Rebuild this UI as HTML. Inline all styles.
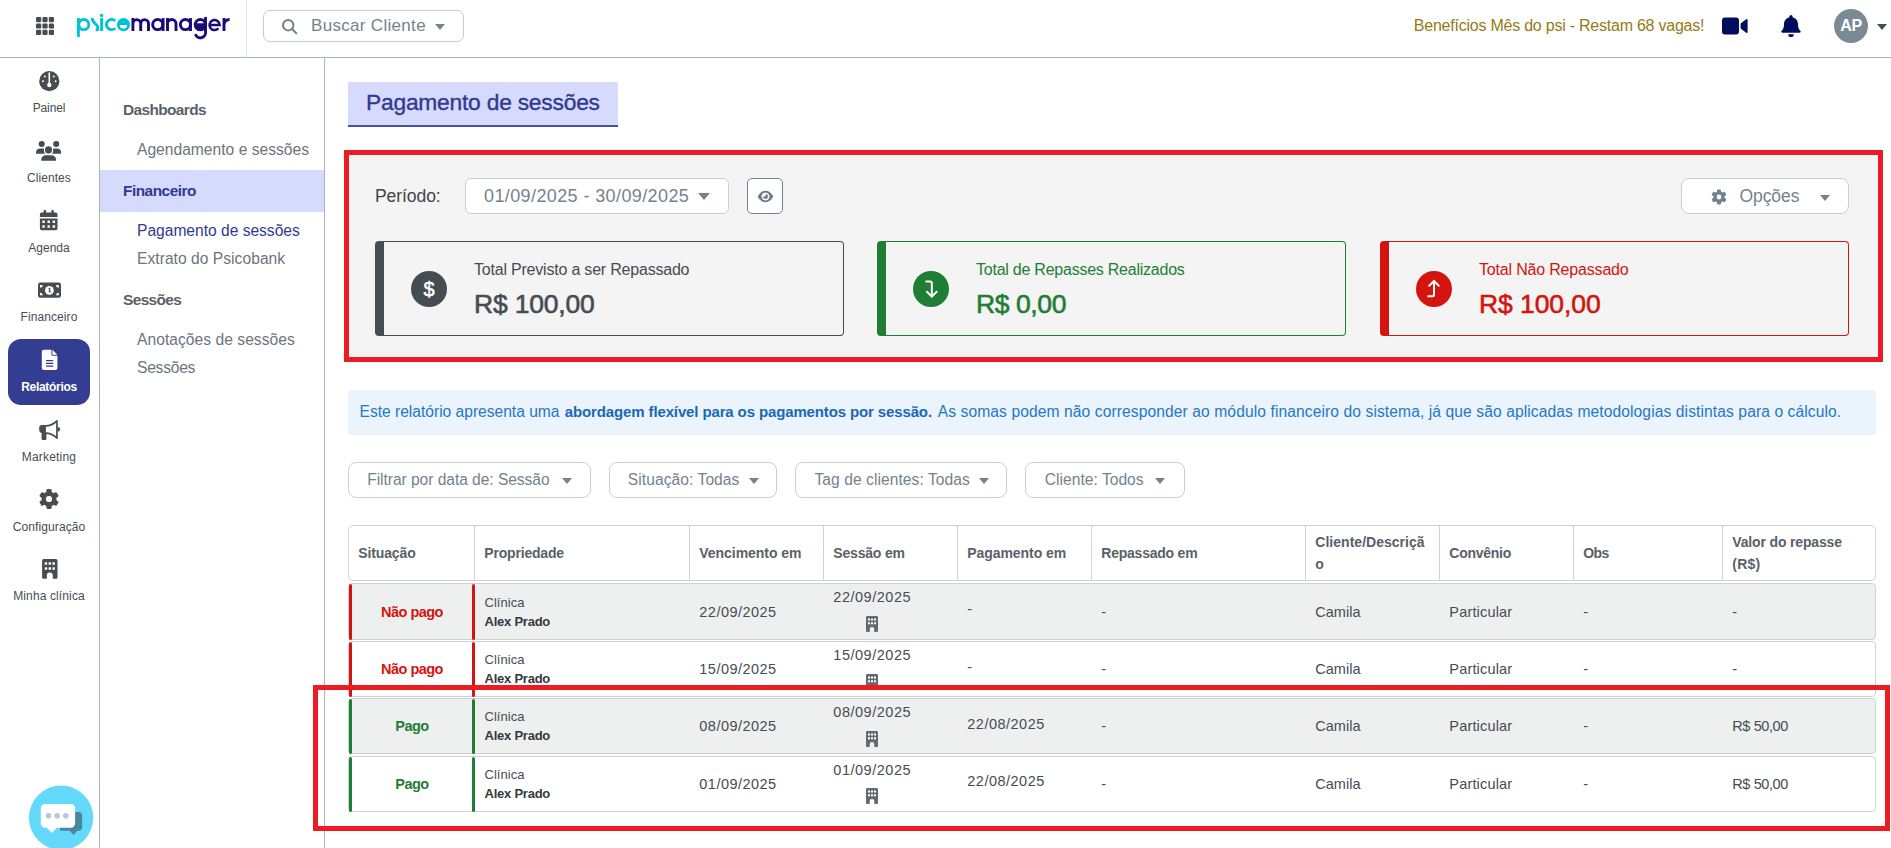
<!DOCTYPE html>
<html lang="pt-BR">
<head>
<meta charset="utf-8">
<title>Pagamento de sessões</title>
<style>
*{box-sizing:border-box;margin:0;padding:0}
html,body{width:1891px;height:848px;overflow:hidden;background:#fff}
body{font-family:"Liberation Sans",sans-serif;color:#454d52;position:relative}
.abs{position:absolute}
.t{position:absolute;white-space:nowrap;line-height:20px;height:20px;margin-top:-10px}
/* header */
#header{position:absolute;left:0;top:0;width:1891px;height:58px;border-bottom:1px solid #aab4bd;background:#fff}
#logosep{position:absolute;left:246px;top:0;width:1px;height:57px;background:#e3e6e9}
#search{position:absolute;left:263px;top:10px;width:201px;height:32px;border:1px solid #c3cad0;border-radius:7px;background:#fff}
/* rail */
#rail{position:absolute;left:0;top:58px;width:100px;height:790px;border-right:1px solid #aab4bd;background:#fff}
.rl{position:absolute;left:0;width:98px;text-align:center;font-size:12px;color:#454d52;line-height:16px;height:16px;margin-top:-8px;white-space:nowrap}
.ri{position:absolute}
#active{position:absolute;left:8px;top:281px;width:82px;height:66px;border-radius:13px;background:#333e93}
/* sub sidebar */
#sub{position:absolute;left:100px;top:58px;width:225px;height:790px;border-right:1px solid #aab4bd;background:#fff}
.sh{font-weight:bold;font-size:15.4px;color:#596168;left:123px}
.si{font-size:15.6px;color:#6c757d;left:137px}
#subact{position:absolute;left:100px;top:170px;width:224px;height:42px;background:#d6dafc}
/* main */
#title{position:absolute;left:348px;top:82px;width:270px;height:45px;background:#d6dafc;border-bottom:2px solid #4650a6}
#panel{position:absolute;left:344px;top:150px;width:1539px;height:212px;border:5px solid #ed1c24;background:#f4f4f4}
.card{position:absolute;top:241px;width:469px;height:95px;border:1px solid;border-left-width:9px;border-radius:4px}
.cic{position:absolute;top:271px;width:36px;height:36px;border-radius:50%}
.ct{font-size:16px}
.cv{font-size:26.500px;-webkit-text-stroke:0.600px;line-height:32px;height:32px;margin-top:-16px}
.btn{position:absolute;background:#fff;border:1px solid #c9cfd4;border-radius:8px}
.inf{font-size:15.600px;color:#2279c6}
#info{position:absolute;left:348px;top:390px;width:1528px;height:45px;background:#ebf3fd;border-radius:4px}
/* table */
#thead{position:absolute;left:348px;top:525px;width:1528px;height:56px;border:1px solid #cfd2d4;border-radius:5px;background:#fff}
.vs{position:absolute;top:525px;width:1px;height:56px;background:#cfd2d4}
.th{font-weight:bold;font-size:14px;color:#596168}
.row{position:absolute;left:348px;width:1528px;border:1px solid #cfd2d4;border-radius:4px}
.row.g{background:#eef0f0}
.row.w{background:#fff}
.bar{position:absolute;width:3px;border-radius:2px}
.td{font-size:14.5px;color:#454d52}
#ann2{position:absolute;left:313px;top:685px;width:1577px;height:146px;border:5px solid #ed1c24}
/*LS*/
#stext{letter-spacing:0.311px}
#benef{letter-spacing:-0.231px}
#r1{letter-spacing:-0.112px}
#r2{letter-spacing:0.063px}
#r3{letter-spacing:0.005px}
#r4{letter-spacing:0.074px}
#r5{letter-spacing:-0.299px}
#r6{letter-spacing:0.202px}
#r7{letter-spacing:0.110px}
#r8{letter-spacing:0.122px}
#s1{letter-spacing:-0.595px}
#s2{letter-spacing:0.017px}
#s3{letter-spacing:-0.492px}
#s4{letter-spacing:-0.010px}
#s5{letter-spacing:0.039px}
#s6{letter-spacing:-0.595px}
#s7{letter-spacing:0.047px}
#s8{letter-spacing:-0.235px}
#ttl{letter-spacing:-0.225px}
#per{letter-spacing:-0.065px}
#dat{letter-spacing:0.392px}
#opc{letter-spacing:-0.083px}
#ct0{letter-spacing:-0.205px}
#ct1{letter-spacing:-0.238px}
#ct2{letter-spacing:-0.182px}
#cv0{letter-spacing:-0.200px}
#cv1{letter-spacing:-0.405px}
#cv2{letter-spacing:-0.075px}
#f0{letter-spacing:-0.049px}
#f1{letter-spacing:0.065px}
#f2{letter-spacing:0.070px}
#f3{letter-spacing:0.019px}
#h0{letter-spacing:-0.137px}
#h1{letter-spacing:-0.190px}
#h2{letter-spacing:-0.042px}
#h3{letter-spacing:-0.184px}
#h4{letter-spacing:-0.072px}
#h5{letter-spacing:-0.230px}
#h6a{letter-spacing:0.023px}
#h7{letter-spacing:-0.269px}
#h8{letter-spacing:-0.667px}
#h9a{letter-spacing:-0.157px}
#h9b{letter-spacing:0.255px}
#ven0{letter-spacing:0.480px}
#ses0{letter-spacing:0.525px}
#pa0{letter-spacing:0.025px}
#pb0{letter-spacing:-0.236px}
#cam0{letter-spacing:0.015px}
#par0{letter-spacing:0.172px}
#ven1{letter-spacing:0.480px}
#ses1{letter-spacing:0.525px}
#pa1{letter-spacing:0.025px}
#pb1{letter-spacing:-0.236px}
#cam1{letter-spacing:0.015px}
#par1{letter-spacing:0.172px}
#ven2{letter-spacing:0.480px}
#ses2{letter-spacing:0.525px}
#pa2{letter-spacing:0.025px}
#pb2{letter-spacing:-0.236px}
#cam2{letter-spacing:0.015px}
#par2{letter-spacing:0.172px}
#ven3{letter-spacing:0.480px}
#ses3{letter-spacing:0.525px}
#pa3{letter-spacing:0.025px}
#pb3{letter-spacing:-0.236px}
#cam3{letter-spacing:0.015px}
#par3{letter-spacing:0.172px}
#pag2{letter-spacing:0.491px}
#pag3{letter-spacing:0.491px}
#val2{letter-spacing:-0.408px}
#val3{letter-spacing:-0.408px}
#infa{letter-spacing:-0.009px}
#infb{letter-spacing:-0.129px}
#infc{letter-spacing:0.101px}
#sit0{letter-spacing:-0.538px}
#sit1{letter-spacing:-0.538px}
#sit2{letter-spacing:-0.518px}
#sit3{letter-spacing:-0.518px}
/*END*/
</style>
</head>
<body>
<div id="header">
  <!-- grid icon -->
  <svg class="abs" style="left:36px;top:17px" width="18" height="18" viewBox="0 0 18 18" fill="#454d52"><rect x="0" y="0" width="5.200" height="5.200" rx="1.100"/><rect x="6.4" y="0" width="5.200" height="5.200" rx="1.100"/><rect x="12.8" y="0" width="5.200" height="5.200" rx="1.100"/><rect x="0" y="6.4" width="5.200" height="5.200" rx="1.100"/><rect x="6.4" y="6.4" width="5.200" height="5.200" rx="1.100"/><rect x="12.8" y="6.4" width="5.200" height="5.200" rx="1.100"/><rect x="0" y="12.8" width="5.200" height="5.200" rx="1.100"/><rect x="6.4" y="12.8" width="5.200" height="5.200" rx="1.100"/><rect x="12.8" y="12.8" width="5.200" height="5.200" rx="1.100"/></svg>
  <!-- logo -->
  <svg id="logo" class="abs" style="left:70px;top:8px" width="170" height="36" viewBox="0 0 170 36" fill="none" stroke-width="2.900">
    <g stroke="#00c4d6">
      <path d="M8.400 10 V28.900"/><circle cx="13.800" cy="16.550" r="5.050"/>
      <path d="M22.200 10.100 C22.200 13 23.400 14.300 25.200 15.600 C27.200 17.100 28 19 27.700 21 L27.700 21.800 L25.700 21.800" stroke-width="2.800" stroke-linejoin="round"/>
      <path d="M31.600 10.100 V23"/><circle cx="31.600" cy="7.500" r="1.800" fill="#00c4d6" stroke="none"/>
      <path d="M45.200 12.900 A5.200 5.050 0 1 0 45.200 20.200"/>
      <circle cx="53.500" cy="16.550" r="6.600" fill="#00c4d6" stroke="none"/>
    </g>
    <path d="M49.800 17.100 H57.100 A3.650 3.500 0 0 1 49.800 17.100 Z" fill="#fff" stroke="none"/>
    <g stroke="#1b0a7c">
      <path d="M62.900 23 V10.100 M62.900 15.500 A3.900 3.900 0 0 1 70.700 15.500 V23 M70.700 15.500 A3.900 3.900 0 0 1 78.500 15.500 V23"/>
      <circle cx="87.700" cy="16.550" r="5.050"/><path d="M93.100 10.100 V23"/>
      <path d="M97.500 23 V10.100 M97.500 15.800 A4.250 4.250 0 0 1 106 15.800 V23"/>
      <circle cx="115.400" cy="16.550" r="5.050"/><path d="M120.500 10.100 V23"/>
      <circle cx="130.300" cy="16.550" r="5.050"/><path d="M125.250 16.700 A5.050 5.050 0 0 0 135.350 16.700 Z" fill="#1b0a7c"/>
      <path d="M135.500 10.100 V23.200 A5.300 5.400 0 0 1 125.800 27.200" stroke-linecap="round"/>
      <path d="M139.600 16.900 H149.600 A5.050 5.050 0 1 0 148.400 20.300" stroke-width="2.500"/>
      <path d="M154 23 V10.100 M154 17 A5.500 5.500 0 0 1 159.600 11.500"/>
    </g>
  </svg>
  <div id="logosep"></div>
  <div id="search">
    <svg class="abs" style="left:17px;top:7px" width="18" height="18" viewBox="0 0 18 18" fill="none" stroke="#72838e" stroke-width="2"><circle cx="7.2" cy="7.2" r="5.2"/><path d="M11 11 L15.300 15.300" stroke-linecap="round"/></svg>
    <div class="t" id="stext" style="left:47px;top:15.400px;font-size:17px;color:#72838e">Buscar Cliente</div>
    <div class="abs" style="left:171px;top:13px;width:0;height:0;border-left:5px solid transparent;border-right:5px solid transparent;border-top:6px solid #72838e"></div>
  </div>
  <div class="t" id="benef" style="left:1413.800px;top:26px;font-size:16px;color:#957a16">Benefícios Mês do psi - Restam 68 vagas!</div>
  <!-- video -->
  <svg class="abs" style="left:1722px;top:17px" width="26" height="18" viewBox="0 0 26 18" fill="#000c5c"><rect x="0" y="0.5" width="17" height="17" rx="3"/><path d="M18.6 6.6 L24.2 2.3 Q25.6 1.5 25.6 3 L25.6 15 Q25.6 16.5 24.2 15.7 L18.6 11.4 Z"/></svg>
  <!-- bell -->
  <svg class="abs" style="left:1780px;top:14px" width="22" height="24" viewBox="0 0 22 24" fill="#000c5c"><path d="M11 1 a1.6 1.6 0 0 1 1.6 1.6 v0.6 c3.4 0.8 5.4 3.600 5.400 7.200 c0 3.600 1.200 5.200 2.400 6.400 c0.600 0.600 0.200 1.900 -0.900 1.900 h-17 c-1.100 0 -1.500 -1.300 -0.900 -1.900 c1.200 -1.200 2.400 -2.800 2.400 -6.400 c0 -3.600 2 -6.400 5.400 -7.200 v-0.600 a1.600 1.600 0 0 1 1.600 -1.600 z M8.200 20.300 h5.600 a2.800 2.800 0 0 1 -5.600 0 z"/></svg>
  <div class="abs" style="left:1834px;top:9px;width:34px;height:34px;border-radius:50%;background:#7a8a94;color:#fff;font-weight:bold;font-size:16px;line-height:34px;text-align:center;letter-spacing:-0.3px">AP</div>
  <div class="abs" style="left:1877px;top:24px;width:0;height:0;border-left:5px solid transparent;border-right:5px solid transparent;border-top:6px solid #454d52"></div>
</div>
<div id="rail">
  <div id="active" style="top:281px"></div>
  <!-- Painel -->
  <svg class="ri" style="left:39px;top:13px" width="21" height="21" viewBox="0 0 21 21"><circle cx="10.3" cy="10.2" r="10.1" fill="#454d52"/><path d="M10.3 2 V13" stroke="#fff" stroke-width="1.6" stroke-linecap="round"/><circle cx="10.3" cy="14" r="2.2" fill="#fff"/><circle cx="4" cy="10.3" r="1" fill="#fff"/><circle cx="5.8" cy="5.6" r="1" fill="#fff"/><circle cx="14.8" cy="5.6" r="1" fill="#fff"/><circle cx="16.6" cy="10.3" r="1" fill="#fff"/></svg>
  <div class="rl" id="r1" style="top:49.5px">Painel</div>
  <!-- Clientes -->
  <svg class="ri" style="left:35px;top:82px" width="27" height="22" viewBox="0 0 27 22" fill="#454d52"><circle cx="6.700" cy="4.060" r="3.050"/><circle cx="21.200" cy="4.060" r="3.050"/><circle cx="13.500" cy="9.900" r="3.550"/><path d="M1 13.700 V12.400 C1 10.200 2.800 8.600 5 8.600 H8.500 Q9.200 8.600 9 9.300 A4.800 4.800 0 0 0 10.200 13.700 Z"/><path d="M26.100 13.700 V12.400 C26.100 10.200 24.300 8.600 22.100 8.600 H18.600 Q17.900 8.600 18.100 9.300 A4.800 4.800 0 0 1 16.900 13.700 Z"/><path d="M6.300 20.800 V19.500 C6.300 17 8.500 15.200 11 15.200 H16.300 C18.800 15.200 21 17 21 19.500 V20.800 Z"/></svg>
  <div class="rl" id="r2" style="top:119.5px">Clientes</div>
  <!-- Agenda -->
  <svg class="ri" style="left:39px;top:152px" width="20" height="21" viewBox="0 0 20 21" fill="#454d52"><rect x="4.6" y="0" width="2.4" height="5" rx="0.8"/><rect x="12.4" y="0" width="2.400" height="5" rx="0.800"/><path d="M2.700 2.600 h14 a1.800 1.800 0 0 1 1.800 1.800 v2.600 h-17.600 v-2.600 a1.800 1.800 0 0 1 1.800 -1.800 z"/><path d="M0.900 8.500 h17.600 v10 a1.800 1.800 0 0 1 -1.800 1.800 h-14 a1.800 1.800 0 0 1 -1.800 -1.800 z"/><g fill="#fff"><rect x="3.300" y="10.500" width="2.500" height="2.500" rx="0.400"/><rect x="8.450" y="10.500" width="2.500" height="2.500" rx="0.400"/><rect x="13.600" y="10.500" width="2.500" height="2.500" rx="0.400"/><rect x="3.300" y="15.300" width="2.500" height="2.500" rx="0.400"/><rect x="8.450" y="15.300" width="2.500" height="2.500" rx="0.400"/><rect x="13.600" y="15.300" width="2.500" height="2.500" rx="0.400"/></g></svg>
  <div class="rl" id="r3" style="top:189.500px">Agenda</div>
  <!-- Financeiro -->
  <svg class="ri" style="left:37px;top:224px" width="25" height="16" viewBox="0 0 25 16"><rect x="1" y="0.600" width="23" height="15.100" rx="2.200" fill="#454d52"/><circle cx="12.400" cy="8.300" r="4.400" fill="#fff"/><path d="M11.500 7.100 l1.200 -0.800 v3.500 m-1.200 0 h2.500" stroke="#454d52" stroke-width="1.100" fill="none"/><g fill="#fff"><path d="M3 3.100 h2.800 a2.800 2.800 0 0 1 -2.800 2.600 z"/><path d="M21.800 3.100 h-2.800 a2.800 2.800 0 0 0 2.800 2.600 z"/><path d="M3 13.300 h2.800 a2.800 2.800 0 0 0 -2.800 -2.600 z"/><path d="M21.800 13.300 h-2.800 a2.800 2.800 0 0 1 2.800 -2.600 z"/></g></svg>
  <div class="rl" id="r4" style="top:258.800px">Financeiro</div>
  <!-- Relatorios -->
  <svg class="ri" style="left:41px;top:291px" width="17" height="22" viewBox="0 0 17 22"><path d="M2.800 0.700 h7.600 v4.900 a1.100 1.100 0 0 0 1.100 1.100 h4.900 v12.400 a2 2 0 0 1 -2 2 h-11.600 a2 2 0 0 1 -2 -2 v-16.400 a2 2 0 0 1 2 -2 z M11.400 0.800 l5 5 h-5 z" fill="#fff"/><path d="M5 11.600 h7.200 M5 14.400 h7.200 M5 17.100 h7.200" stroke="#333e93" stroke-width="1.200"/></svg>
  <div class="rl" id="r5" style="top:328.600px;color:#fff;font-weight:bold">Relatórios</div>
  <!-- Marketing -->
  <svg class="ri" style="left:38px;top:361px" width="23" height="22" viewBox="0 0 23 22" fill="#454d52"><path d="M4 6.100 H7.900 V13.900 H4 A2.800 2.800 0 0 1 1.200 11.100 V8.900 A2.800 2.800 0 0 1 4 6.100 Z"/><path d="M3.600 13.500 H8.400 V19.900 A1.100 1.100 0 0 1 7.200 21 H4.700 A1.100 1.100 0 0 1 3.600 19.900 Z"/><path d="M7.600 6.950 C13.200 6.950 15.600 5.200 18.950 1.900 V19.100 C15.600 15.800 13.200 14.050 7.600 14.050" fill="none" stroke="#454d52" stroke-width="1.700" stroke-linejoin="round"/><path d="M19.700 8 a2.350 2.350 0 0 1 0 4.700 z"/></svg>
  <div class="rl" id="r6" style="top:398.500px">Marketing</div>
  <!-- Config -->
  <svg class="ri" style="left:38.100px;top:430.100px" width="22" height="22" viewBox="0 0 22 22"><g fill="#454d52"><circle cx="11" cy="11" r="7.5"/><rect x="8.40" y="1.10" width="5.20" height="4.40" rx="1.1" transform="rotate(0 11 11)"/><rect x="8.40" y="1.10" width="5.20" height="4.40" rx="1.1" transform="rotate(60 11 11)"/><rect x="8.40" y="1.10" width="5.20" height="4.40" rx="1.1" transform="rotate(120 11 11)"/><rect x="8.40" y="1.10" width="5.20" height="4.40" rx="1.1" transform="rotate(180 11 11)"/><rect x="8.40" y="1.10" width="5.20" height="4.40" rx="1.1" transform="rotate(240 11 11)"/><rect x="8.40" y="1.10" width="5.20" height="4.40" rx="1.1" transform="rotate(300 11 11)"/></g><circle cx="11" cy="11" r="3.1" fill="#fff"/></svg>
  <div class="rl" id="r7" style="top:468.500px">Configuração</div>
  <!-- Clinica -->
  <svg class="ri" style="left:42px;top:501px" width="16" height="20" viewBox="0 0 16 20"><path d="M1.700 0 h12.200 a1.600 1.600 0 0 1 1.600 1.600 v16.800 a1.400 1.400 0 0 1 -1.400 1.400 h-3.300 v-3.400 a3 3 0 0 0 -6 0 v3.400 h-3.300 a1.400 1.400 0 0 1 -1.400 -1.400 v-16.800 a1.600 1.600 0 0 1 1.600 -1.600 z" fill="#454d52"/><g fill="#fff"><rect x="2.700" y="3.200" width="2.500" height="2.500" rx="0.500"/><rect x="6.550" y="3.200" width="2.500" height="2.500" rx="0.500"/><rect x="10.400" y="3.200" width="2.500" height="2.500" rx="0.500"/><rect x="2.700" y="8.200" width="2.500" height="2.500" rx="0.500"/><rect x="6.550" y="8.200" width="2.500" height="2.500" rx="0.500"/><rect x="10.400" y="8.200" width="2.500" height="2.500" rx="0.500"/></g></svg>
  <div class="rl" id="r8" style="top:538px">Minha clínica</div>
  <!-- chat -->
  <svg class="ri" style="left:28px;top:727px" width="66" height="66" viewBox="0 0 66 66"><circle cx="33.100" cy="32.800" r="32.200" fill="#63dafc"/><path d="M32 26.900 h18.600 a3.600 3.600 0 0 1 3.600 3.600 v11.600 a3.600 3.600 0 0 1 -3.600 3.600 h-1.400 l-3.800 4.200 l-3.800 -4.200 h-9.600 z" fill="#49899b"/><path d="M17 18.900 h25.900 a4.200 4.200 0 0 1 4.200 4.200 v15.500 a4.200 4.200 0 0 1 -4.200 4.200 h-14.100 l-4.900 5.200 l-5 -5.200 h-1.900 a4.200 4.200 0 0 1 -4.200 -4.200 v-15.500 a4.200 4.200 0 0 1 4.200 -4.200 z" fill="#fff"/><circle cx="20.500" cy="30.700" r="2.800" fill="#b9c5d9"/><circle cx="29.100" cy="30.700" r="2.800" fill="#b9c5d9"/><circle cx="37.800" cy="30.700" r="2.800" fill="#b9c5d9"/></svg>
</div>
<div id="sub"></div>
<div id="subact"></div>
<div class="t sh" id="s1" style="top:110.3px">Dashboards</div>
<div class="t si" id="s2" style="top:150.2px">Agendamento e sessões</div>
<div class="t sh" id="s3" style="top:191.1px;color:#2f3a8f">Financeiro</div>
<div class="t si" id="s4" style="top:231.2px;color:#2f3a8f">Pagamento de sessões</div>
<div class="t si" id="s5" style="top:259px">Extrato do Psicobank</div>
<div class="t sh" id="s6" style="top:300.2px">Sessões</div>
<div class="t si" id="s7" style="top:340px">Anotações de sessões</div>
<div class="t si" id="s8" style="top:368px">Sessões</div>
<div id="title"></div>
<div class="t" id="ttl" style="left:366px;top:102.400px;font-size:22.800px;color:#2f3a8f;line-height:30px;height:30px;margin-top:-15px;-webkit-text-stroke:0.350px #2f3a8f">Pagamento de sessões</div>
<div id="panel"></div>
<div class="t" id="per" style="left:375px;top:195.800px;font-size:17.500px;color:#3e454a">Período:</div>
<div class="btn" style="left:465px;top:178px;width:264px;height:36px;border-radius:6px"></div>
<div class="t" id="dat" style="left:484px;top:195.800px;font-size:18px;color:#72838e">01/09/2025 - 30/09/2025</div>
<div class="abs" style="left:698px;top:193px;width:0;height:0;border-left:6px solid transparent;border-right:6px solid transparent;border-top:7px solid #72838e"></div>
<div class="btn" style="left:747px;top:178px;width:36px;height:36px;border-radius:5px;border-color:#72838e"></div>
<svg class="abs" style="left:757px;top:190px" width="17" height="13" viewBox="0 0 17 13"><path d="M0.700 6.500 C2.600 2.600 5.400 0.800 8.500 0.800 C11.600 0.800 14.400 2.600 16.300 6.500 C14.400 10.400 11.600 12.200 8.500 12.200 C5.400 12.200 2.600 10.400 0.700 6.500 Z M8.500 2.600 a3.900 3.900 0 1 0 0.010 0 Z" fill="#6c7c88" fill-rule="evenodd"/><path d="M8.500 4.100 a2.400 2.400 0 1 1 -2.300 1.800 a1.300 1.300 0 0 0 2.300 -1.800 z" fill="#6c7c88"/></svg>
<div class="btn" style="left:1681px;top:178px;width:168px;height:36px"></div>
<svg class="abs" style="left:1709.600px;top:187.500px" width="18" height="18" viewBox="0 0 18 18"><g fill="#72838e"><circle cx="9" cy="9" r="5.7"/><rect x="7.00" y="1.40" width="4.00" height="3.90" rx="1.1" transform="rotate(0 9 9)"/><rect x="7.00" y="1.40" width="4.00" height="3.90" rx="1.1" transform="rotate(60 9 9)"/><rect x="7.00" y="1.40" width="4.00" height="3.90" rx="1.1" transform="rotate(120 9 9)"/><rect x="7.00" y="1.40" width="4.00" height="3.90" rx="1.1" transform="rotate(180 9 9)"/><rect x="7.00" y="1.40" width="4.00" height="3.90" rx="1.1" transform="rotate(240 9 9)"/><rect x="7.00" y="1.40" width="4.00" height="3.90" rx="1.1" transform="rotate(300 9 9)"/></g><circle cx="9" cy="9" r="2.4" fill="#fff"/></svg>
<div class="t" id="opc" style="left:1739.500px;top:195.800px;font-size:17.500px;color:#72838e">Opções</div>
<div class="abs" style="left:1820px;top:194.500px;width:0;height:0;border-left:5px solid transparent;border-right:5px solid transparent;border-top:6px solid #72838e"></div>
<div class="card" style="left:375px;border-color:#454d52"></div>
<div class="cic" style="left:411px;background:#454d52"></div>
<div class="t" style="left:411px;width:36px;text-align:center;top:289px;font-size:20px;color:#fff;-webkit-text-stroke:0.500px #fff">$</div>
<div class="t ct" id="ct0" style="left:474px;top:270.200px;color:#454d52">Total Previsto a ser Repassado</div>
<div class="t cv" id="cv0" style="left:474px;top:304.100px;color:#454d52">R$ 100,00</div>
<div class="card" style="left:877px;border-color:#1e7e34"></div>
<div class="cic" style="left:913px;background:#1e7e34"></div>
<svg class="abs" style="left:913px;top:271px" width="36" height="36" viewBox="0 0 36 36" fill="none" stroke="#fff" stroke-width="2"><path d="M12.500 10.400 H17.300 Q18.800 10.400 18.800 11.900 V25.400"/><path d="M13.400 20.300 L18.800 25.700 L24.200 20.300"/></svg>
<div class="t ct" id="ct1" style="left:976px;top:270.200px;color:#1e7e34">Total de Repasses Realizados</div>
<div class="t cv" id="cv1" style="left:976px;top:304.100px;color:#1e7e34">R$ 0,00</div>
<div class="card" style="left:1380px;border-color:#d4150f"></div>
<div class="cic" style="left:1416px;background:#d4150f"></div>
<svg class="abs" style="left:1416px;top:271px" width="36" height="36" viewBox="0 0 36 36" fill="none" stroke="#fff" stroke-width="2"><path d="M11.400 25.200 H16.500 Q18 25.200 18 23.700 V10.300"/><path d="M12.600 15.400 L18 10 L23.400 15.400"/></svg>
<div class="t ct" id="ct2" style="left:1479px;top:270.200px;color:#d4150f">Total Não Repassado</div>
<div class="t cv" id="cv2" style="left:1479px;top:304.100px;color:#d4150f">R$ 100,00</div>
<div id="info"></div>
<div class="t inf" id="infa" style="left:359.500px;top:412.400px">Este relatório apresenta uma</div>
<div class="t inf" id="infb" style="left:564.800px;top:412.400px;font-weight:bold;color:#1a68b4;font-size:15px">abordagem flexível para os pagamentos por sessão.</div>
<div class="t inf" id="infc" style="left:937.700px;top:412.400px">As somas podem não corresponder ao módulo financeiro do sistema, já que são aplicadas metodologias distintas para o cálculo.</div>
<div class="btn" style="left:348px;top:462px;width:243px;height:36px"></div>
<div class="t ft" id="f0" style="left:367.2px;top:480.300px;font-size:15.600px;color:#72838e">Filtrar por data de: Sessão</div>
<div class="abs" style="left:562px;top:477.500px;width:0;height:0;border-left:5px solid transparent;border-right:5px solid transparent;border-top:6px solid #72838e"></div>
<div class="btn" style="left:609px;top:462px;width:168px;height:36px"></div>
<div class="t ft" id="f1" style="left:627.8px;top:480.300px;font-size:15.600px;color:#72838e">Situação: Todas</div>
<div class="abs" style="left:748.7px;top:477.500px;width:0;height:0;border-left:5px solid transparent;border-right:5px solid transparent;border-top:6px solid #72838e"></div>
<div class="btn" style="left:795px;top:462px;width:212px;height:36px"></div>
<div class="t ft" id="f2" style="left:814.4px;top:480.300px;font-size:15.600px;color:#72838e">Tag de clientes: Todas</div>
<div class="abs" style="left:978.8px;top:477.500px;width:0;height:0;border-left:5px solid transparent;border-right:5px solid transparent;border-top:6px solid #72838e"></div>
<div class="btn" style="left:1025px;top:462px;width:160px;height:36px"></div>
<div class="t ft" id="f3" style="left:1044.8px;top:480.300px;font-size:15.600px;color:#72838e">Cliente: Todos</div>
<div class="abs" style="left:1155.4px;top:477.500px;width:0;height:0;border-left:5px solid transparent;border-right:5px solid transparent;border-top:6px solid #72838e"></div>
<div id="thead"></div>
<div class="vs" style="left:474px"></div>
<div class="vs" style="left:689px"></div>
<div class="vs" style="left:823px"></div>
<div class="vs" style="left:957px"></div>
<div class="vs" style="left:1091px"></div>
<div class="vs" style="left:1305px"></div>
<div class="vs" style="left:1439px"></div>
<div class="vs" style="left:1573px"></div>
<div class="vs" style="left:1722px"></div>
<div class="t th" id="h0" style="left:358.3px;top:552.800px">Situação</div>
<div class="t th" id="h1" style="left:484.3px;top:552.800px">Propriedade</div>
<div class="t th" id="h2" style="left:699.3px;top:552.800px">Vencimento em</div>
<div class="t th" id="h3" style="left:833.3px;top:552.800px">Sessão em</div>
<div class="t th" id="h4" style="left:967.3px;top:552.800px">Pagamento em</div>
<div class="t th" id="h5" style="left:1101.3px;top:552.800px">Repassado em</div>
<div class="t th" id="h7" style="left:1449.3px;top:552.800px">Convênio</div>
<div class="t th" id="h8" style="left:1583.3px;top:552.800px">Obs</div>
<div class="t th" id="h6a" style="left:1315.300px;top:541.800px">Cliente/Descriçã</div>
<div class="t th" id="h6b" style="left:1315.300px;top:563.800px">o</div>
<div class="t th" id="h9a" style="left:1732.300px;top:541.800px">Valor do repasse</div>
<div class="t th" id="h9b" style="left:1732.300px;top:563.800px">(R$)</div>
<!--ROWS-->
<div class="row g" style="top:583px;height:57px"></div>
<div class="bar" style="left:349px;top:583.5px;height:56px;background:#d4150f"></div><div class="bar" style="left:472px;top:583.5px;height:56px;background:#d4150f"></div>
<div class="t td sit" id="sit0" style="left:352px;width:120px;text-align:center;top:611.6px;color:#d4150f;font-weight:bold">Não pago</div>
<div class="t td" id="pa0" style="left:484.5px;top:602.8px;font-size:13px">Clínica</div>
<div class="t td" id="pb0" style="left:484.5px;top:621.8px;font-size:13px;font-weight:bold;color:#33393d">Alex Prado</div>
<div class="t td dt" id="ven0" style="left:699.3px;top:611.6px">22/09/2025</div>
<div class="t td dt" id="ses0" style="left:833.3px;top:597.2px">22/09/2025</div>
<svg class="abs" style="left:866px;top:616px" width="12" height="16" viewBox="0 0 12 16"><path d="M1.3 0 h9.4 a1.3 1.3 0 0 1 1.3 1.3 v13.4 a1.3 1.3 0 0 1 -1.3 1.3 h-2.4 v-2.8 a2.3 2.3 0 0 0 -4.6 0 v2.8 h-2.4 a1.3 1.3 0 0 1 -1.3 -1.3 v-13.4 a1.3 1.3 0 0 1 1.3 -1.3 z" fill="#626a71"/><g fill="#fff"><rect x="2" y="2.5" width="2" height="2"/><rect x="5" y="2.5" width="2" height="2"/><rect x="8" y="2.5" width="2" height="2"/><rect x="2" y="6.3" width="2" height="2"/><rect x="5" y="6.3" width="2" height="2"/><rect x="8" y="6.3" width="2" height="2"/></g></svg>
<div class="t td dt" id="pag0" style="left:967.3px;top:609.3px">-</div>
<div class="t td" style="left:1101.3px;top:611.6px">-</div>
<div class="t td" id="cam0" style="left:1315.3px;top:611.6px">Camila</div>
<div class="t td" id="par0" style="left:1449.3px;top:611.6px">Particular</div>
<div class="t td" style="left:1583.3px;top:611.6px">-</div>
<div class="t td" id="val0" style="left:1732.3px;top:611.6px">-</div>
<div class="row w" style="top:641px;height:56px"></div>
<div class="bar" style="left:349px;top:641.5px;height:55px;background:#d4150f"></div><div class="bar" style="left:472px;top:641.5px;height:55px;background:#d4150f"></div>
<div class="t td sit" id="sit1" style="left:352px;width:120px;text-align:center;top:669.1px;color:#d4150f;font-weight:bold">Não pago</div>
<div class="t td" id="pa1" style="left:484.5px;top:660.3px;font-size:13px">Clínica</div>
<div class="t td" id="pb1" style="left:484.5px;top:679.3px;font-size:13px;font-weight:bold;color:#33393d">Alex Prado</div>
<div class="t td dt" id="ven1" style="left:699.3px;top:669.1px">15/09/2025</div>
<div class="t td dt" id="ses1" style="left:833.3px;top:654.7px">15/09/2025</div>
<svg class="abs" style="left:866px;top:673.6px" width="12" height="16" viewBox="0 0 12 16"><path d="M1.3 0 h9.4 a1.3 1.3 0 0 1 1.3 1.3 v13.4 a1.3 1.3 0 0 1 -1.3 1.3 h-2.4 v-2.8 a2.3 2.3 0 0 0 -4.6 0 v2.8 h-2.4 a1.3 1.3 0 0 1 -1.3 -1.3 v-13.4 a1.3 1.3 0 0 1 1.3 -1.3 z" fill="#626a71"/><g fill="#fff"><rect x="2" y="2.5" width="2" height="2"/><rect x="5" y="2.5" width="2" height="2"/><rect x="8" y="2.5" width="2" height="2"/><rect x="2" y="6.3" width="2" height="2"/><rect x="5" y="6.3" width="2" height="2"/><rect x="8" y="6.3" width="2" height="2"/></g></svg>
<div class="t td dt" id="pag1" style="left:967.3px;top:666.8px">-</div>
<div class="t td" style="left:1101.3px;top:669.1px">-</div>
<div class="t td" id="cam1" style="left:1315.3px;top:669.1px">Camila</div>
<div class="t td" id="par1" style="left:1449.3px;top:669.1px">Particular</div>
<div class="t td" style="left:1583.3px;top:669.1px">-</div>
<div class="t td" id="val1" style="left:1732.3px;top:669.1px">-</div>
<div class="row g" style="top:698px;height:56px"></div>
<div class="bar" style="left:349px;top:698.5px;height:55px;background:#1e7e34"></div><div class="bar" style="left:472px;top:698.5px;height:55px;background:#1e7e34"></div>
<div class="t td sit" id="sit2" style="left:352px;width:120px;text-align:center;top:725.6px;color:#1e7e34;font-weight:bold">Pago</div>
<div class="t td" id="pa2" style="left:484.5px;top:716.8px;font-size:13px">Clínica</div>
<div class="t td" id="pb2" style="left:484.5px;top:735.8px;font-size:13px;font-weight:bold;color:#33393d">Alex Prado</div>
<div class="t td dt" id="ven2" style="left:699.3px;top:725.6px">08/09/2025</div>
<div class="t td dt" id="ses2" style="left:833.3px;top:712.2px">08/09/2025</div>
<svg class="abs" style="left:866px;top:731px" width="12" height="16" viewBox="0 0 12 16"><path d="M1.3 0 h9.4 a1.3 1.3 0 0 1 1.3 1.3 v13.4 a1.3 1.3 0 0 1 -1.3 1.3 h-2.4 v-2.8 a2.3 2.3 0 0 0 -4.6 0 v2.8 h-2.4 a1.3 1.3 0 0 1 -1.3 -1.3 v-13.4 a1.3 1.3 0 0 1 1.3 -1.3 z" fill="#626a71"/><g fill="#fff"><rect x="2" y="2.5" width="2" height="2"/><rect x="5" y="2.5" width="2" height="2"/><rect x="8" y="2.5" width="2" height="2"/><rect x="2" y="6.3" width="2" height="2"/><rect x="5" y="6.3" width="2" height="2"/><rect x="8" y="6.3" width="2" height="2"/></g></svg>
<div class="t td dt" id="pag2" style="left:967.3px;top:723.6px">22/08/2025</div>
<div class="t td" style="left:1101.3px;top:725.6px">-</div>
<div class="t td" id="cam2" style="left:1315.3px;top:725.6px">Camila</div>
<div class="t td" id="par2" style="left:1449.3px;top:725.6px">Particular</div>
<div class="t td" style="left:1583.3px;top:725.6px">-</div>
<div class="t td" id="val2" style="left:1732.3px;top:725.6px">R$ 50,00</div>
<div class="row w" style="top:756px;height:56px"></div>
<div class="bar" style="left:349px;top:756.5px;height:55px;background:#1e7e34"></div><div class="bar" style="left:472px;top:756.5px;height:55px;background:#1e7e34"></div>
<div class="t td sit" id="sit3" style="left:352px;width:120px;text-align:center;top:784.1px;color:#1e7e34;font-weight:bold">Pago</div>
<div class="t td" id="pa3" style="left:484.5px;top:775.3px;font-size:13px">Clínica</div>
<div class="t td" id="pb3" style="left:484.5px;top:794.3px;font-size:13px;font-weight:bold;color:#33393d">Alex Prado</div>
<div class="t td dt" id="ven3" style="left:699.3px;top:784.1px">01/09/2025</div>
<div class="t td dt" id="ses3" style="left:833.3px;top:769.7px">01/09/2025</div>
<svg class="abs" style="left:866px;top:788px" width="12" height="16" viewBox="0 0 12 16"><path d="M1.3 0 h9.4 a1.3 1.3 0 0 1 1.3 1.3 v13.4 a1.3 1.3 0 0 1 -1.3 1.3 h-2.4 v-2.8 a2.3 2.3 0 0 0 -4.6 0 v2.8 h-2.4 a1.3 1.3 0 0 1 -1.3 -1.3 v-13.4 a1.3 1.3 0 0 1 1.3 -1.3 z" fill="#626a71"/><g fill="#fff"><rect x="2" y="2.5" width="2" height="2"/><rect x="5" y="2.5" width="2" height="2"/><rect x="8" y="2.5" width="2" height="2"/><rect x="2" y="6.3" width="2" height="2"/><rect x="5" y="6.3" width="2" height="2"/><rect x="8" y="6.3" width="2" height="2"/></g></svg>
<div class="t td dt" id="pag3" style="left:967.3px;top:780.8px">22/08/2025</div>
<div class="t td" style="left:1101.3px;top:784.1px">-</div>
<div class="t td" id="cam3" style="left:1315.3px;top:784.1px">Camila</div>
<div class="t td" id="par3" style="left:1449.3px;top:784.1px">Particular</div>
<div class="t td" style="left:1583.3px;top:784.1px">-</div>
<div class="t td" id="val3" style="left:1732.3px;top:784.1px">R$ 50,00</div>
<!--/ROWS-->
<div id="ann2"></div>
</body>
</html>
